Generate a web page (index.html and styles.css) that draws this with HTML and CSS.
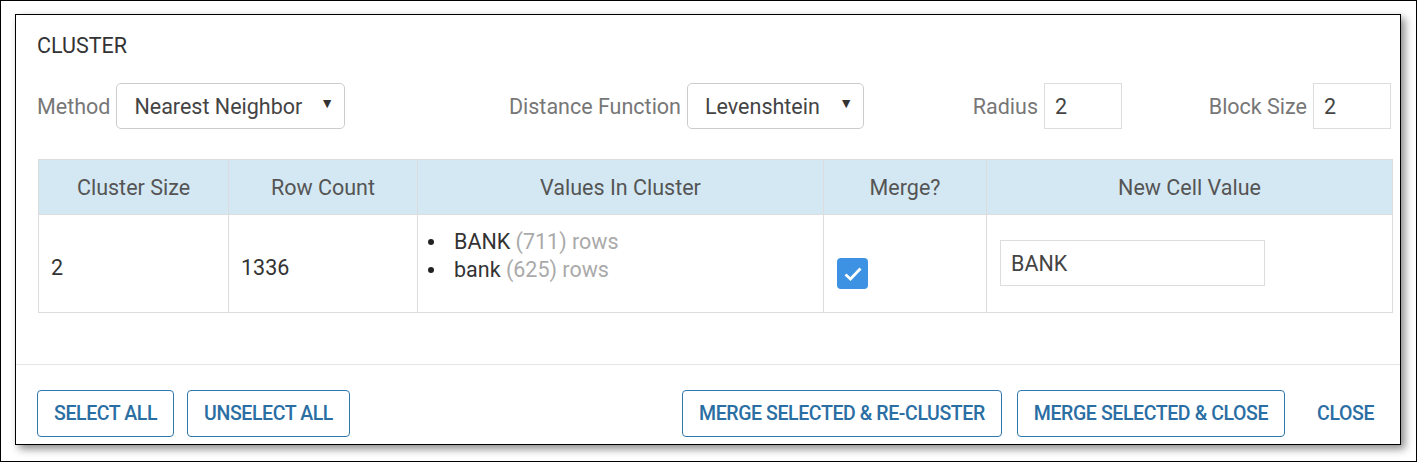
FILE: index.html
```html
<!DOCTYPE html>
<html>
<head>
<meta charset="utf-8">
<link rel="stylesheet" href="styles.css">
</head>
<body>
<div class="frame">
  <div class="dialog">
    <div class="content">
      <div class="title">CLUSTER</div>
      <div class="controls">
        <div class="group g1">
          <span class="label">Method</span>
          <div class="select s1"><span>Nearest Neighbor</span><span class="caret">&#9660;</span></div>
        </div>
        <div class="group g2">
          <span class="label">Distance Function</span>
          <div class="select s2"><span>Levenshtein</span><span class="caret">&#9660;</span></div>
        </div>
        <div class="group g3">
          <span class="label">Radius</span>
          <div class="num">2</div>
        </div>
        <div class="group g4">
          <span class="label">Block Size</span>
          <div class="num">2</div>
        </div>
      </div>
      <table class="grid">
        <colgroup>
          <col class="c1"><col class="c2"><col class="c3"><col class="c4"><col class="c5">
        </colgroup>
        <thead>
          <tr><th>Cluster Size</th><th>Row Count</th><th>Values In Cluster</th><th>Merge?</th><th>New Cell Value</th></tr>
        </thead>
        <tbody>
          <tr>
            <td>2</td>
            <td>1336</td>
            <td class="values">
              <ul>
                <li>BANK <span class="muted">(711) rows</span></li>
                <li>bank <span class="muted">(625) rows</span></li>
              </ul>
            </td>
            <td><div class="check"><svg width="20" height="16" viewBox="0 0 20 16"><path d="M2.5 8.5 L7.5 13 L17.5 2.5" fill="none" stroke="#fff" stroke-width="2.8"/></svg></div></td>
            <td><div class="newval">BANK</div></td>
          </tr>
        </tbody>
      </table>
    </div>
    <div class="footer">
      <div class="left">
        <button class="btn">SELECT ALL</button>
        <button class="btn">UNSELECT ALL</button>
      </div>
      <div class="right">
        <button class="btn">MERGE SELECTED &amp; RE-CLUSTER</button>
        <button class="btn">MERGE SELECTED &amp; CLOSE</button>
        <button class="btn flat">CLOSE</button>
      </div>
    </div>
  </div>
</div>
</body>
</html>
```
FILE: styles.css
```css
* { box-sizing: border-box; }
html, body { margin: 0; padding: 0; background: #fff; }
body { font-family: Roboto, "Noto Sans", sans-serif; }
.frame {
  width: 1417px; height: 462px;
  border: 1px solid #000;
  padding: 13px 0 0 14px;
}
.dialog {
  width: 1386px; height: 431px;
  border: 1px solid #000;
  background: #fff;
  box-shadow: 4px 4px 8px rgba(0,0,0,0.45);
  display: flex; flex-direction: column;
}
.content { padding: 19px 8px 0 21px; flex: 1; border-bottom: 1px solid #e6e6e6; }
.title { font-size: 21.5px; color: #333; line-height: 24px; height: 24px; }
.controls {
  display: grid;
  grid-template-columns: 308px 519px 258px 267px;
  margin-top: 25px;
  height: 46px;
}
.group { display: flex; align-items: center; gap: 6px; }
.g2, .g3, .g4 { justify-content: flex-end; }
.label { font-size: 21.5px; color: #777; }
.select {
  height: 46px; border: 1px solid #ccc; border-radius: 5px;
  display: flex; align-items: center; justify-content: space-between;
  padding: 0 10px 0 17px; font-size: 21.5px; color: #444;
}
.s1 { width: 229px; }
.s2 { width: 177px; }
.caret { font-size: 14px; color: #333; margin-top: -6px; }
.num {
  width: 78px; height: 46px; border: 1px solid #ddd;
  display: flex; align-items: center; padding-left: 10px;
  font-size: 21.5px; color: #444;
}
.g4 .num { margin-right: -2px; }
.grid {
  margin-top: 30px; margin-left: 1px;
  border-collapse: collapse; table-layout: fixed;
  width: 1354px;
}
.c1 { width: 190px; } .c2 { width: 189px; } .c3 { width: 406px; } .c4 { width: 163px; } .c5 { width: 406px; }
.grid th, .grid td { border: 1px solid #dcdcdc; }
.grid th {
  background: #d4e8f3; height: 55px; font-weight: 400;
  font-size: 21.5px; color: #555; text-align: center;
}
.grid td {
  height: 98px; font-size: 21.5px; color: #333;
  padding: 14px 12px 6px; vertical-align: middle;
}
.grid td.values { vertical-align: top; padding: 13px 10px 0; }
.values ul { list-style: none; margin: 0; padding: 0; }
.values li { display: flex; align-items: center; line-height: 28px; white-space: pre; }
.values li::before {
  content: ""; width: 6px; height: 6px; border-radius: 50%;
  background: #222; margin-right: 20px;
}
.muted { color: #aaa; }
.check {
  width: 31px; height: 31px; background: #3d92e4; border-radius: 4px;
  display: flex; align-items: center; justify-content: center;
  margin-top: 12px; margin-left: 1px;
}
.newval {
  width: 265px; height: 46px; border: 1px solid #ddd;
  display: flex; align-items: center; padding-left: 10px;
  font-size: 21.5px; color: #444; margin-top: -9px; margin-left: 1px;
}
.footer {
  height: 79px; display: flex; justify-content: space-between;
  padding: 25px 23px 0 21px;
}
.left, .right { display: flex; gap: 13px; align-items: flex-start; }
.right { gap: 15px; }
.btn {
  font-family: Roboto, sans-serif; font-weight: 500; font-size: 19.5px;
  color: #2a6ea3; background: #fff; border: 1.5px solid #2f78ad;
  border-radius: 4px; height: 47px; padding: 0 16px;
  letter-spacing: -0.4px;
}
.btn.flat { border-color: transparent; padding: 0 2px 0 16px; }
```
